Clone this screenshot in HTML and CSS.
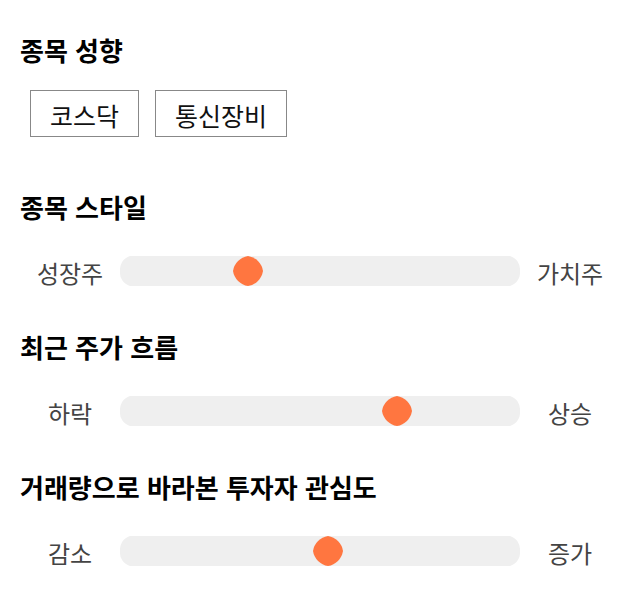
FILE: index.html
```html
<!DOCTYPE html>
<html lang="ko">
<head>
  <meta charset="UTF-8">
  <title>종목 분석</title>
  <link rel="stylesheet" href="styles.css">
</head>
<body>

  <section class="group">
    <h2>종목 성향</h2>
    <div class="tags">
      <span class="tag">코스닥</span>
      <span class="tag">통신장비</span>
    </div>
  </section>

  <section class="group">
    <h2>종목 스타일</h2>
    <div class="slider-row">
      <span class="label">성장주</span>
      <div class="track">
        <svg class="thumb" style="left: 32%" viewBox="0 0 30 30"><path d="M15 0A18 18 0 0 1 30 15A18 18 0 0 1 15 30A18 18 0 0 1 0 15A18 18 0 0 1 15 0Z"/></svg>
      </div>
      <span class="label">가치주</span>
    </div>
  </section>

  <section class="group">
    <h2>최근 주가 흐름</h2>
    <div class="slider-row">
      <span class="label">하락</span>
      <div class="track">
        <svg class="thumb" style="left: 69.25%" viewBox="0 0 30 30"><path d="M15 0A18 18 0 0 1 30 15A18 18 0 0 1 15 30A18 18 0 0 1 0 15A18 18 0 0 1 15 0Z"/></svg>
      </div>
      <span class="label">상승</span>
    </div>
  </section>

  <section class="group">
    <h2>거래량으로 바라본 투자자 관심도</h2>
    <div class="slider-row">
      <span class="label">감소</span>
      <div class="track">
        <svg class="thumb" style="left: 52%" viewBox="0 0 30 30"><path d="M15 0A18 18 0 0 1 30 15A18 18 0 0 1 15 30A18 18 0 0 1 0 15A18 18 0 0 1 15 0Z"/></svg>
      </div>
      <span class="label">증가</span>
    </div>
  </section>

</body>
</html>
```

FILE: styles.css
```css
html {
  background: #fff;
  font-family: 'Noto Sans CJK KR', 'Noto Sans', sans-serif;
  color: #000;
}

body {
  margin: 0;
  padding: 35px 20px 0;
}

.group {
  margin-bottom: 46px;
}

.group:first-child {
  margin-bottom: 55px;
}

h2 {
  margin: 0 0 34px;
  font-size: 26px;
  line-height: 30px;
  font-weight: 700;
}

.group:first-child h2 {
  margin-bottom: 25px;
}

.tags {
  display: flex;
  gap: 16px;
  padding-left: 10px;
}

.tag {
  display: flex;
  align-items: center;
  justify-content: center;
  height: 45px;
  padding: 2px 19px 0;
  box-sizing: border-box;
  height: 47px;
  border: 1px solid #888;
  font-size: 25px;
  color: #111;
}

.slider-row {
  display: flex;
  align-items: center;
  height: 30px;
}

.label {
  width: 100px;
  text-align: center;
  font-size: 24px;
  color: #444;
  line-height: 30px;
  padding-top: 4px;
}

.track {
  position: relative;
  flex: 1;
  height: 30px;
  background: #efefef;
  clip-path: path('M0 15A14 14 0 0 1 10 0H390A14 14 0 0 1 400 15A14 14 0 0 1 390 30H10A14 14 0 0 1 0 15Z');
}

.thumb {
  position: absolute;
  top: 0;
  width: 30px;
  height: 30px;
  margin-left: -15px;
  fill: #ff7640;
}
```
